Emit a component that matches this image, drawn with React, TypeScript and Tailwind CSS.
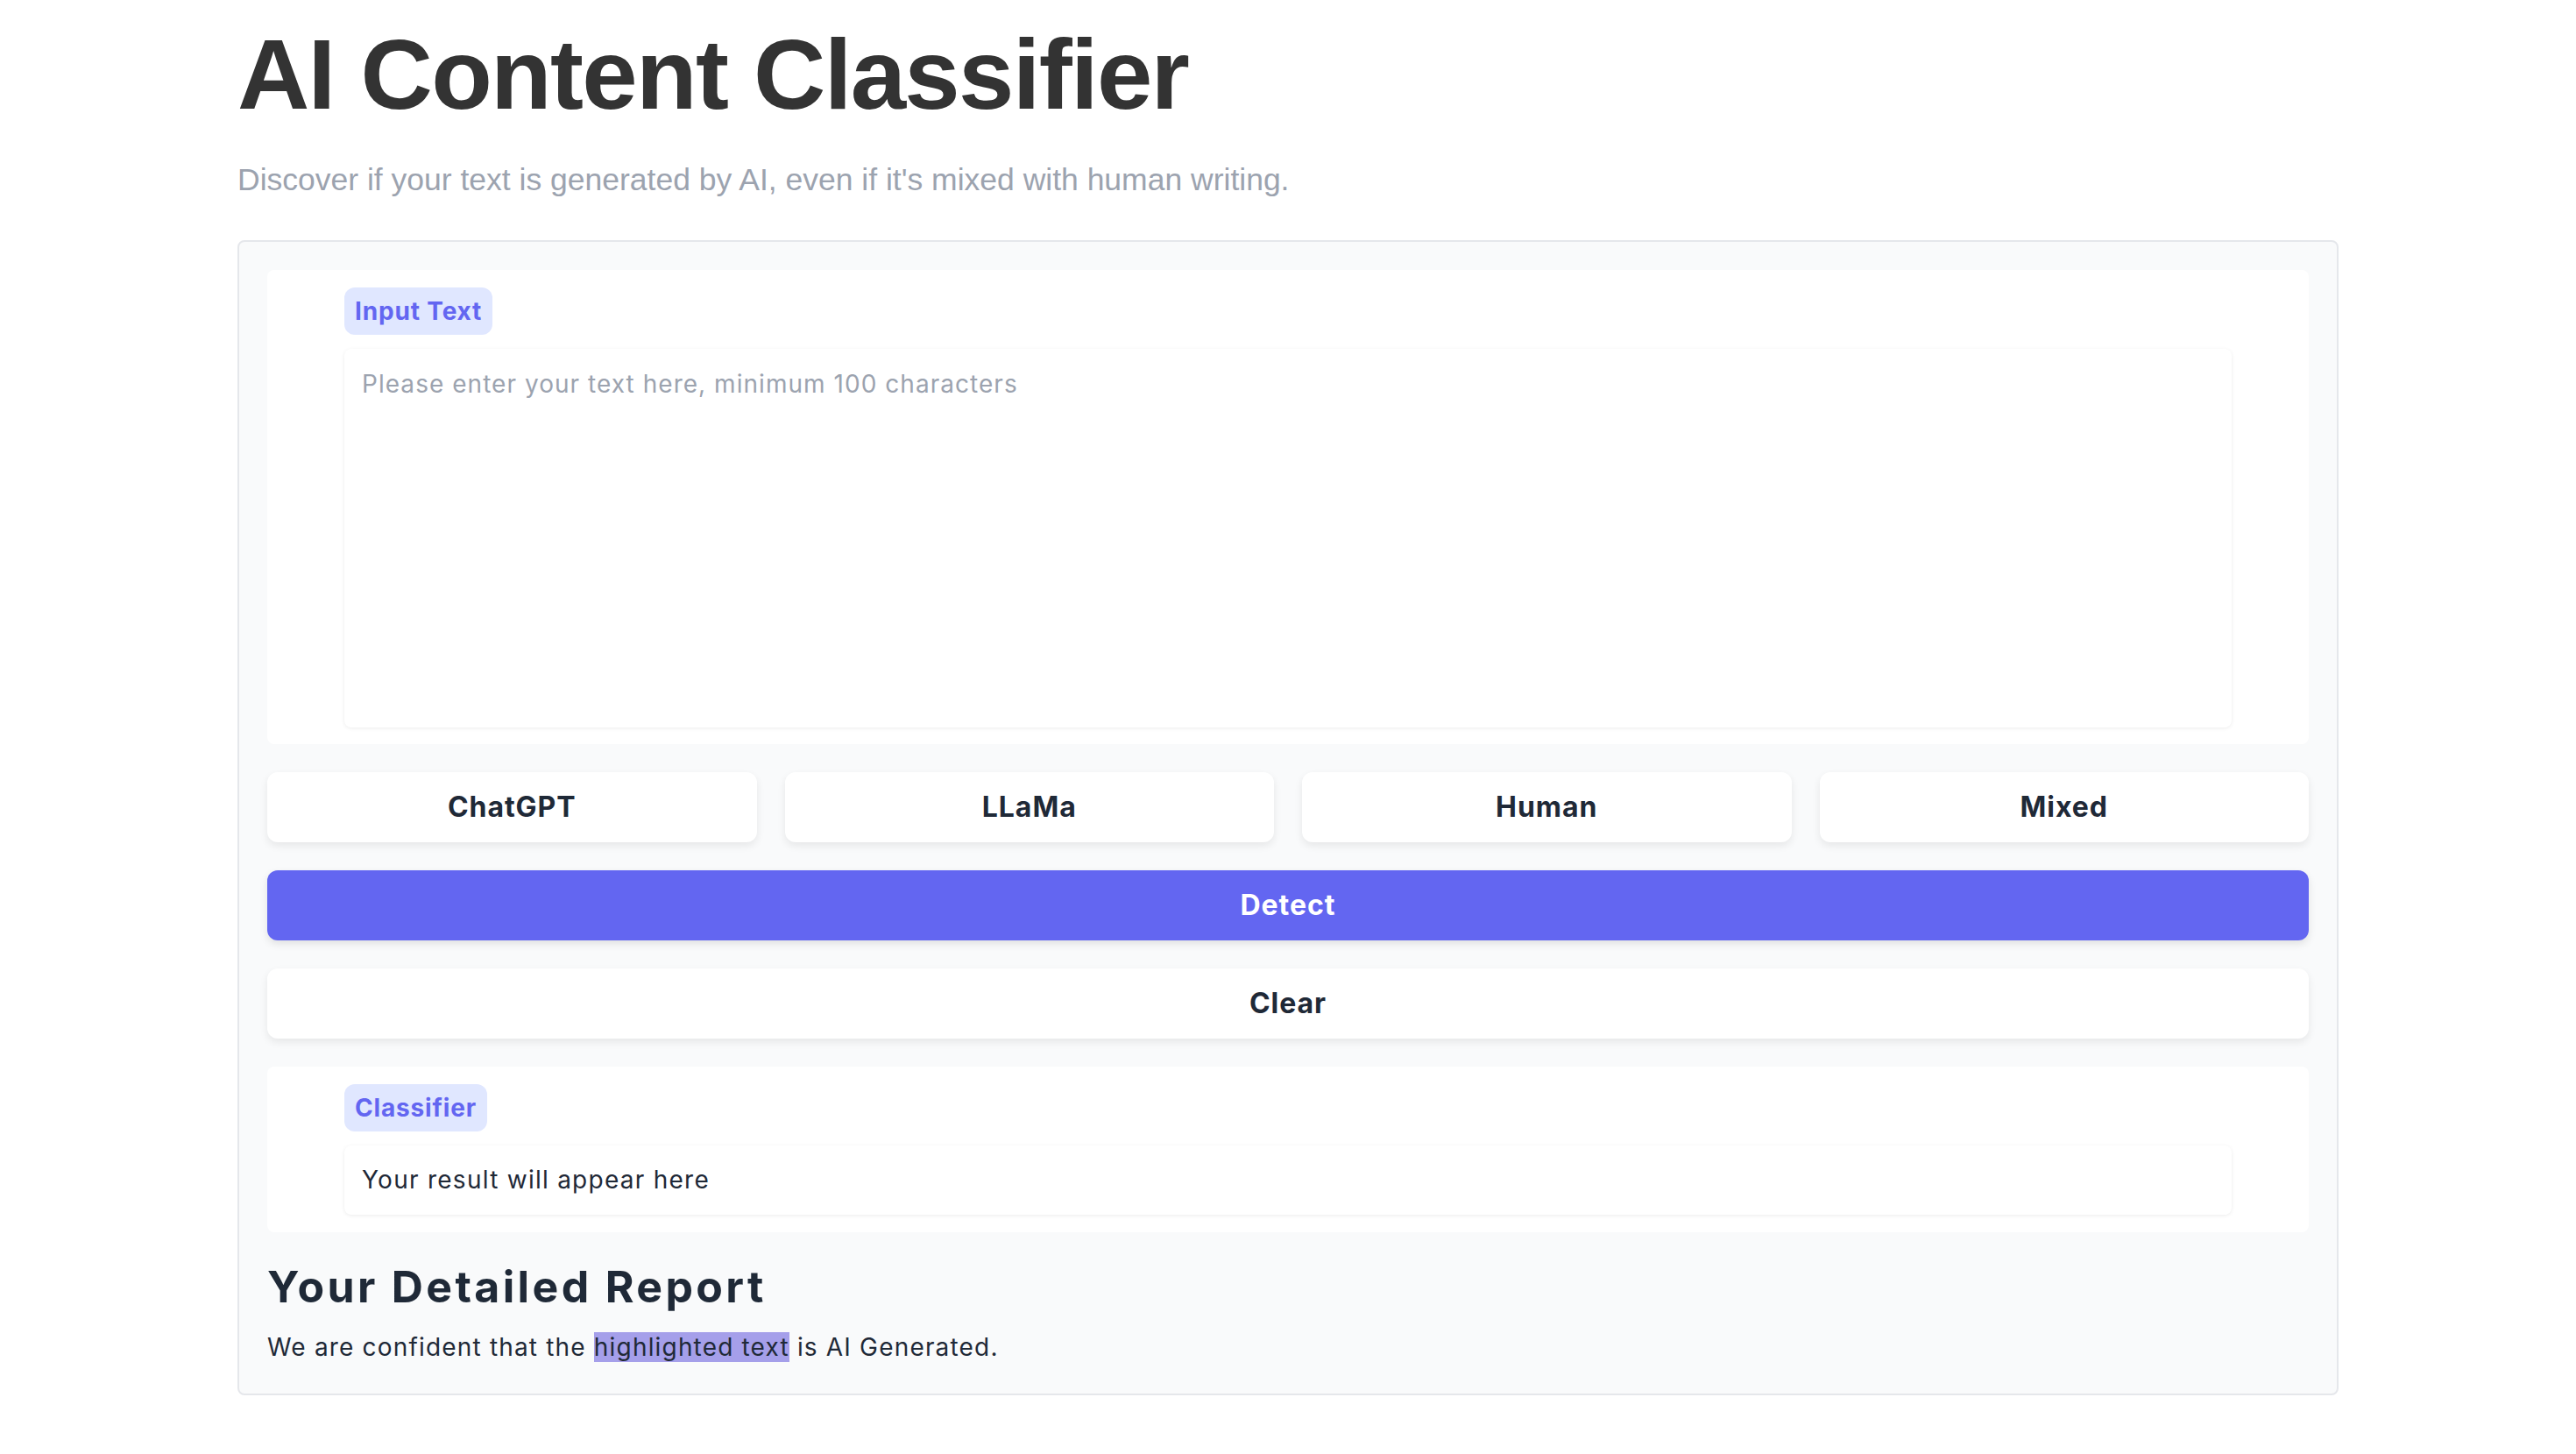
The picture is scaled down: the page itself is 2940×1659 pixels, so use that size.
import React from "react";

const body = { fontFamily: "Inter, 'Noto Sans', sans-serif" };

const Badge: React.FC<{ label: string }> = ({ label }) => (
  <div className="self-start h-[54px] px-3 flex items-center rounded-xl bg-[#e0e7ff]">
    <span className="text-[28px] font-bold tracking-[0.03em] text-[#6366f1] leading-none">{label}</span>
  </div>
);

const OptionButton: React.FC<{ label: string }> = ({ label }) => (
  <button className="h-20 rounded-xl bg-white shadow-[0_4px_10px_rgba(0,0,0,0.08)] text-[32px] font-bold tracking-[0.03em] text-[#1f2937]">
    {label}
  </button>
);

export default function App() {
  return (
    <div className="min-h-screen bg-white">
      <div className="mx-auto w-[2398px]">
        {/* Header */}
        <h1
          className="pt-7 text-[114px] font-bold leading-none tracking-[-0.015em] text-[#333333]"
          style={{ fontFamily: "'Liberation Sans', Arial, sans-serif" }}
        >
          AI Content Classifier
        </h1>
        <p
          className="mt-[46px] text-[35.5px] leading-none text-[#9ca3af]"
          style={{ fontFamily: "'Liberation Sans', Arial, sans-serif" }}
        >
          Discover if your text is generated by AI, even if it's mixed with human writing.
        </p>

        {/* Main card */}
        <div
          className="mt-[50px] rounded-lg border-2 border-[#e5e7eb] bg-[#f9fafb] p-8 flex flex-col gap-8"
          style={body}
        >
          {/* Input panel */}
          <div className="rounded-lg bg-white px-[88px] pt-5 pb-[19px] flex flex-col gap-4">
            <Badge label="Input Text" />
            <textarea
              className="h-[432px] w-full resize-none rounded-lg bg-white p-5 text-[28px] leading-[40px] tracking-[0.037em] text-[#1f2937] placeholder:text-[#9ca3af] outline-none shadow-[0_1px_4px_rgba(0,0,0,0.08)]"
              placeholder="Please enter your text here, minimum 100 characters"
            />
          </div>

          {/* Model options */}
          <div className="grid grid-cols-4 gap-8">
            <OptionButton label="ChatGPT" />
            <OptionButton label="LLaMa" />
            <OptionButton label="Human" />
            <OptionButton label="Mixed" />
          </div>

          <button className="h-20 rounded-xl bg-[#6366f1] text-[32px] font-bold tracking-[0.03em] text-white shadow-[0_4px_10px_rgba(0,0,0,0.1)]">
            Detect
          </button>

          <button className="h-20 rounded-xl bg-white text-[32px] font-bold tracking-[0.03em] text-[#1f2937] shadow-[0_4px_10px_rgba(0,0,0,0.08)]">
            Clear
          </button>

          {/* Result panel */}
          <div className="rounded-lg bg-white px-[88px] pt-5 pb-5 flex flex-col gap-4">
            <Badge label="Classifier" />
            <div className="h-[79px] rounded-lg bg-white px-5 flex items-center shadow-[0_1px_4px_rgba(0,0,0,0.08)]">
              <span className="text-[28px] tracking-[0.045em] text-[#1f2937]">Your result will appear here</span>
            </div>
          </div>

          {/* Report */}
          <div className="flex flex-col gap-[18px]">
            <h2 className="text-[50px] font-bold leading-[60px] tracking-[0.067em] text-[#1f2937]">Your Detailed Report</h2>
            <p className="text-[28px] leading-[42px] tracking-[0.042em] text-[#1f2937]">
              We are confident that the <span className="bg-[#a59fea]">highlighted text</span> is AI Generated.
            </p>
          </div>
        </div>
      </div>
    </div>
  );
}
